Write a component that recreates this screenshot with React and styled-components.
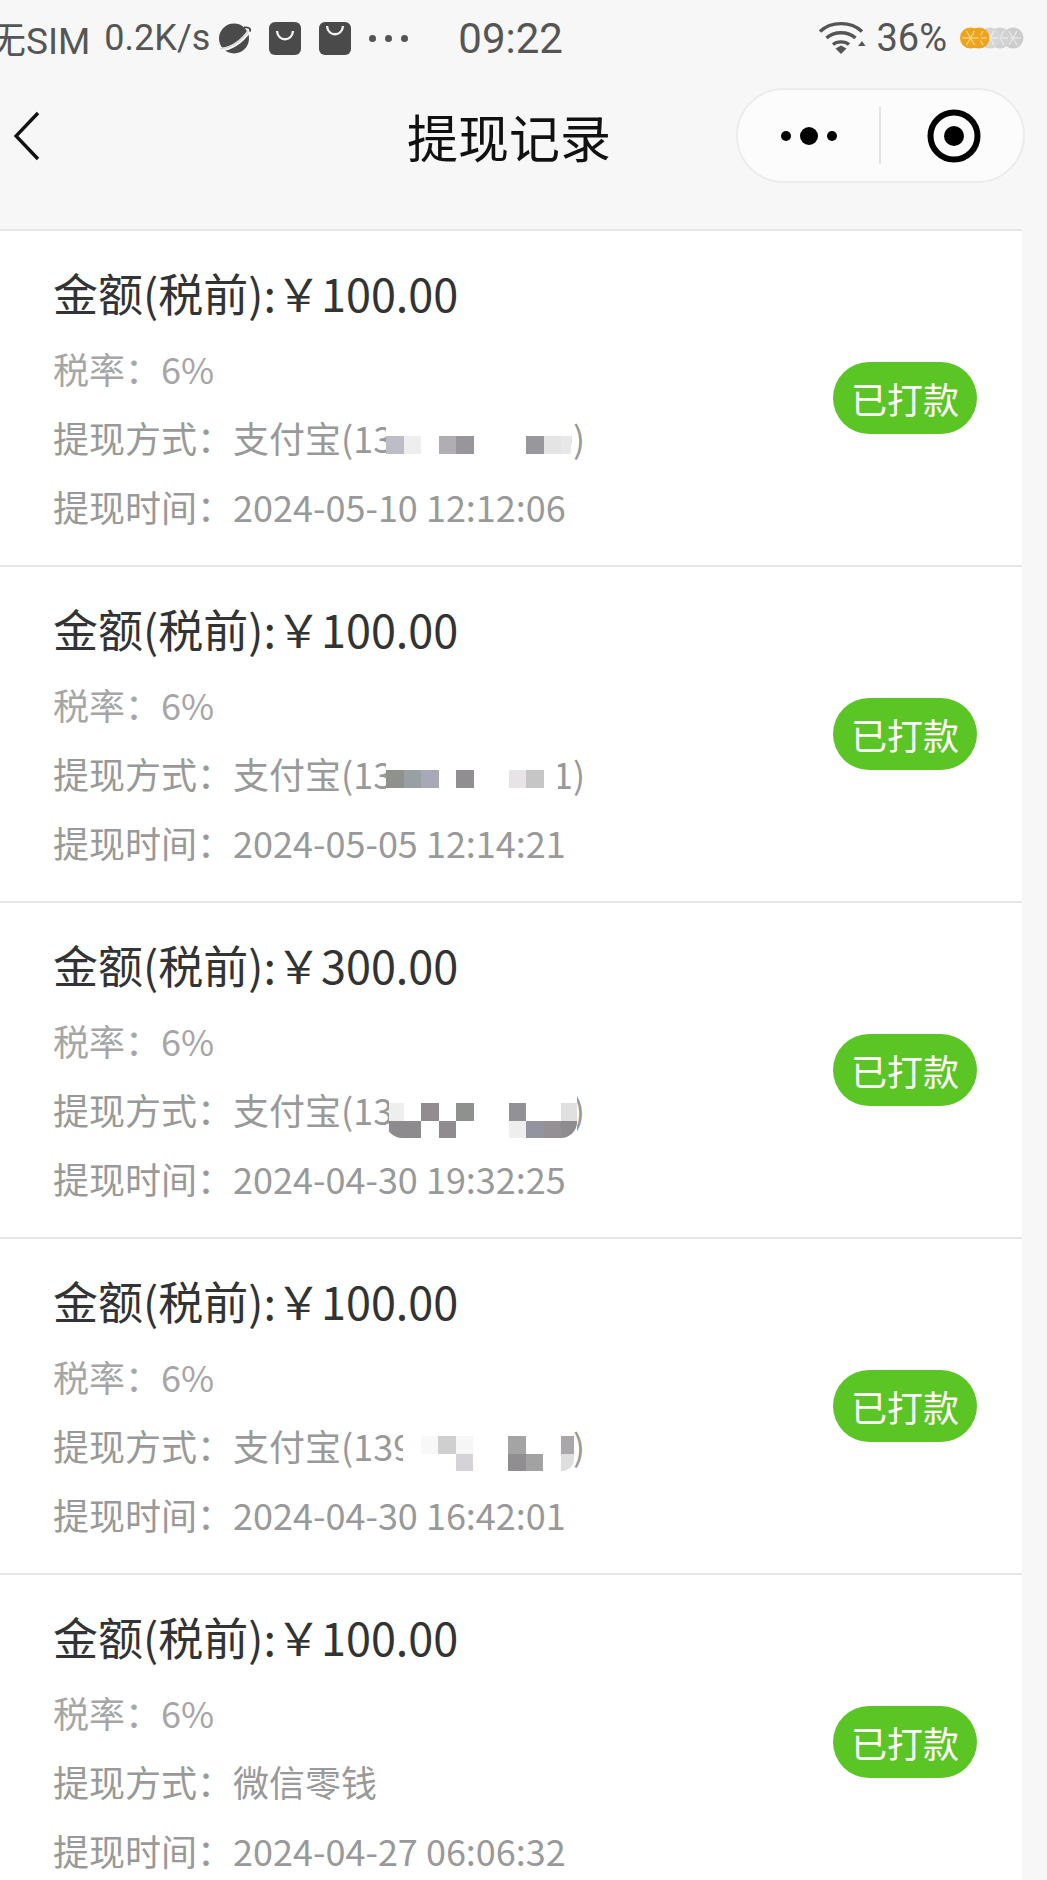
import React from "react";
import styled, { createGlobalStyle } from "styled-components";

const W = "transparent";

const records = [
  {
    amount: "100.00",
    method: "支付宝(13000000000)",
    time: "2024-05-10 12:12:06",
    mosaic: {
      left: 333,
      top: 33,
      width: 185,
      cells: [[ "#bdbdc8", "#eee", W, "#b0aeb2", "#98969a", W, W, W, "#98979e", "#e4e4e4", "#e8e8e8" ]],
    },
  },
  {
    amount: "100.00",
    method: "支付宝(13000000001)",
    time: "2024-05-05 12:14:21",
    mosaic: {
      left: 333,
      top: 31,
      width: 172,
      cells: [[ "#8e918c", "#99a0a3", "#a8a9b6", W, "#918e92", W, W, "#e7e3e7", "#c6c6c6", W, W ]],
    },
  },
  {
    amount: "300.00",
    method: "支付宝(13000000000)",
    time: "2024-04-30 19:32:25",
    mosaic: {
      left: 336,
      top: 28,
      width: 188,
      radius: 16,
      shift: 3,
      cells: [
        [ "#eee", W, "#908c90", W, "#8f928c", W, W, "#929196", W, W, "#e0e0e0" ],
        [ "#8e8b8f", "#8e8b8f", W, "#8f8b8f", W, W, W, "#eee", "#9295a0", "#949094", "#8f8c90" ],
      ],
    },
  },
  {
    amount: "100.00",
    method: "支付宝(13900000000)",
    time: "2024-04-30 16:42:01",
    mosaic: {
      left: 350,
      top: 25,
      width: 171,
      radius: 12,
      cells: [
        [ W, "#f8f8f8", "#cfcfcf", "#f6f6f6", W, W, "#a4a4a4", W, W, "#a9a7aa", W ],
        [ W, W, W, "#d5d3d8", W, W, "#918e91", "#a2a2a2", W, "#dedede", W ],
      ],
    },
  },
  {
    amount: "100.00",
    method: "微信零钱",
    time: "2024-04-27 06:06:32",
  },
];

export default function App() {
  return (
    <Page>
      <GlobalStyle />
      <StatusBar>
        <SimText>无SIM</SimText>
        <SpeedText>0.2K/s</SpeedText>
        <StatusIcons>
          <PlanetIcon />
          <BagIcon y={9} />
          <BagIcon y={4} />
          <Dots>
            <i />
            <i />
            <i />
          </Dots>
        </StatusIcons>
        <Clock>09:22</Clock>
        <StatusRight>
          <WifiIcon />
          <BatteryText>36%</BatteryText>
          <OrangeIcon />
        </StatusRight>
      </StatusBar>

      <NavBar>
        <BackIcon />
        <NavTitle>提现记录</NavTitle>
        <Capsule>
          <MoreButton>
            <MoreIcon />
          </MoreButton>
          <CapsuleLine />
          <CloseButton>
            <TargetIcon />
          </CloseButton>
        </Capsule>
      </NavBar>

      <List>
        {records.map((item, i) => (
          <Row key={i}>
            <Info>
              <Amount>金额(税前):￥{item.amount}</Amount>
              <Line $light>税率：6%</Line>
              <Line>
                提现方式：{item.method}
                {item.mosaic && (
                  <MosaicCover $left={item.mosaic.left} $width={item.mosaic.width}>
                    <MosaicGrid
                      $top={item.mosaic.top}
                      $radius={item.mosaic.radius}
                      $shift={item.mosaic.shift}
                    >
                      {item.mosaic.cells.flat().map((c, j) => (
                        <Cell key={j} $c={c} />
                      ))}
                    </MosaicGrid>
                  </MosaicCover>
                )}
              </Line>
              <Line>提现时间：{item.time}</Line>
            </Info>
            <Badge>已打款</Badge>
          </Row>
        ))}
      </List>
    </Page>
  );
}

function PlanetIcon() {
  return (
    <svg width="33" height="33" viewBox="0 0 33 33">
      <circle cx="16" cy="16.500" r="15" fill="#4a4a4a" />
      <path d="M1 27.500C12 28 24 20 31 9" fill="none" stroke="#f7f7f7" strokeWidth="3.400" />
      <path d="M2 26.500C12 27 24 19 30.500 8.500" fill="none" stroke="#d8d8d8" strokeWidth="1.600" />
      <path d="M26 5.500C30 5 33 6 32 9.500" fill="none" stroke="#4a4a4a" strokeWidth="2" />
    </svg>
  );
}

function BagIcon({ y }) {
  return (
    <svg width="32" height="33" viewBox="0 0 32 33">
      <rect x="0" y="0" width="32" height="33" rx="6" fill="#4a4a4a" />
      <path
        d={`M8 ${y}C9 ${y + 11} 23 ${y + 11} 24 ${y}`}
        fill="none"
        stroke="#f2f2f2"
        strokeWidth="2.400"
      />
    </svg>
  );
}

function WifiIcon() {
  return (
    <svg width="48" height="34" viewBox="0 0 48 34">
      <path d="M2 10.500C13 0 33 0 44 10.500" fill="none" stroke="#555" strokeWidth="3.400" />
      <path d="M8.500 17C16 10 30 10 37.500 17" fill="none" stroke="#555" strokeWidth="3.400" />
      <path d="M15 23.500C19 20 27 20 31 23.500" fill="none" stroke="#555" strokeWidth="3.400" />
      <path d="M17.500 27.500L23 24.500L28.500 27.500L23 33Z" fill="#555" />
      <path d="M40 25L44 20L47.500 25Z" fill="#555" />
    </svg>
  );
}

function OrangeIcon() {
  const slices = (cx, color) =>
    [0, 60, 120].map((a) => (
      <path
        key={a}
        d={`M${cx - 8} 11H${cx + 8}`}
        stroke={color}
        strokeWidth="1.200"
        transform={`rotate(${a} ${cx} 11)`}
      />
    ));
  return (
    <svg width="64" height="22" viewBox="0 0 64 22">
      <circle cx="53" cy="11" r="10.500" fill="#cdcdcd" />
      {slices(53, "#e8e8e8")}
      <circle cx="40" cy="11" r="10.500" fill="#d2d2d2" />
      {slices(40, "#ececec")}
      <circle cx="30" cy="11" r="10.500" fill="#d6d6d6" />
      {slices(30, "#eee")}
      <circle cx="19" cy="11" r="10.500" fill="#efa31d" />
      {slices(19, "#fbd98e")}
      <circle cx="10.500" cy="11" r="10.500" fill="#efa31d" />
      {slices(10.5, "#fbd98e")}
    </svg>
  );
}

function BackIcon() {
  return (
    <svg width="26" height="50" viewBox="0 0 26 50">
      <path d="M24 2L2 25L24 48" fill="none" stroke="#111" strokeWidth="3.400" />
    </svg>
  );
}

function MoreIcon() {
  return (
    <svg width="58" height="20" viewBox="0 0 58 20">
      <circle cx="6" cy="10" r="5" fill="#000" />
      <circle cx="29" cy="10" r="9" fill="#000" />
      <circle cx="52" cy="10" r="5" fill="#000" />
    </svg>
  );
}

function TargetIcon() {
  return (
    <svg width="54" height="54" viewBox="0 0 54 54">
      <circle cx="27" cy="27" r="23.500" fill="none" stroke="#000" strokeWidth="6" />
      <circle cx="27" cy="27" r="10" fill="#000" />
    </svg>
  );
}

const GlobalStyle = createGlobalStyle`
  html, body {
    margin: 0;
    padding: 0;
    overflow: hidden;
    background: #f7f7f7;
  }
`;

const Page = styled.div`
  width: 1047px;
  height: 1880px;
  overflow: hidden;
  background: #f7f7f7;
  font-family: "Noto Sans CJK SC", "Noto Sans", sans-serif;
`;

const StatusBar = styled.div`
  display: flex;
  align-items: center;
  height: 76px;
  color: #555;
  font-family: Roboto, "Noto Sans CJK SC", sans-serif;
`;

const SimText = styled.span`
  font-size: 37px;
  margin-left: -11px;
  white-space: nowrap;
`;

const SpeedText = styled.span`
  font-size: 36px;
  margin-left: 14px;
`;

const StatusIcons = styled.div`
  display: flex;
  align-items: center;
  gap: 18px;
  margin-left: 8px;
`;

const Dots = styled.div`
  display: flex;
  gap: 9px;

  i {
    width: 7px;
    height: 7px;
    border-radius: 50%;
    background: #555;
  }
`;

const Clock = styled.span`
  font-size: 42px;
  margin-left: 50px;
`;

const StatusRight = styled.div`
  display: flex;
  align-items: center;
  margin-left: auto;
  margin-right: 23px;
`;

const BatteryText = styled.span`
  font-size: 38px;
  margin-left: 10px;
  margin-right: 13px;
`;

const NavBar = styled.div`
  display: flex;
  align-items: center;
  height: 153px;
  padding: 0 22px 34px 14px;
  box-sizing: border-box;
`;

const NavTitle = styled.div`
  font-size: 51px;
  color: #111;
  margin-left: 367px;
  white-space: nowrap;
`;

const Capsule = styled.div`
  display: flex;
  align-items: center;
  margin-left: auto;
  width: 289px;
  height: 95px;
  box-sizing: border-box;
  border: 2px solid #ececec;
  border-radius: 48px;
  background: #fcfcfc;
`;

const MoreButton = styled.div`
  display: flex;
  justify-content: center;
  flex: none;
  width: 141px;
`;

const CapsuleLine = styled.div`
  flex: none;
  width: 2px;
  height: 57px;
  background: #e3e3e3;
`;

const CloseButton = styled.div`
  display: flex;
  justify-content: center;
  flex: 1;
  padding-left: 3px;
`;

const List = styled.div`
  width: 1022px;
  background: #fff;
`;

const Row = styled.div`
  display: flex;
  align-items: center;
  justify-content: space-between;
  box-sizing: border-box;
  height: 336px;
  padding: 0 45px 0 53px;
  border-top: 2px solid #e6e6e6;
`;

const Info = styled.div`
  display: flex;
  flex-direction: column;
  padding-top: 7px;
`;

const Amount = styled.div`
  font-size: 45px;
  line-height: 62px;
  color: #333;
  margin-bottom: 10px;
  white-space: nowrap;
`;

const Line = styled.div`
  position: relative;
  font-size: 36px;
  line-height: 69px;
  color: ${(p) => (p.$light ? "#a6a6a6" : "#999")};
  white-space: nowrap;
`;

const MosaicCover = styled.div`
  position: absolute;
  left: ${(p) => p.$left}px;
  top: 10px;
  bottom: 0;
  width: ${(p) => p.$width}px;
  background: #fff;
  overflow: hidden;
`;

const MosaicGrid = styled.div`
  display: grid;
  grid-template-columns: repeat(11, 17.5px);
  grid-auto-rows: 17.5px;
  overflow: hidden;
  margin-top: ${(p) => p.$top - 10}px;
  margin-left: -${(p) => p.$shift || 0}px;
  border-radius: 0 0 ${(p) => p.$radius || 0}px ${(p) => p.$radius || 0}px;
`;

const Cell = styled.div`
  background: ${(p) => p.$c};
`;

const Badge = styled.div`
  flex: none;
  width: 144px;
  height: 72px;
  border-radius: 36px;
  background: #5cc526;
  color: #fff;
  font-size: 36px;
  line-height: 72px;
  text-align: center;
`;
